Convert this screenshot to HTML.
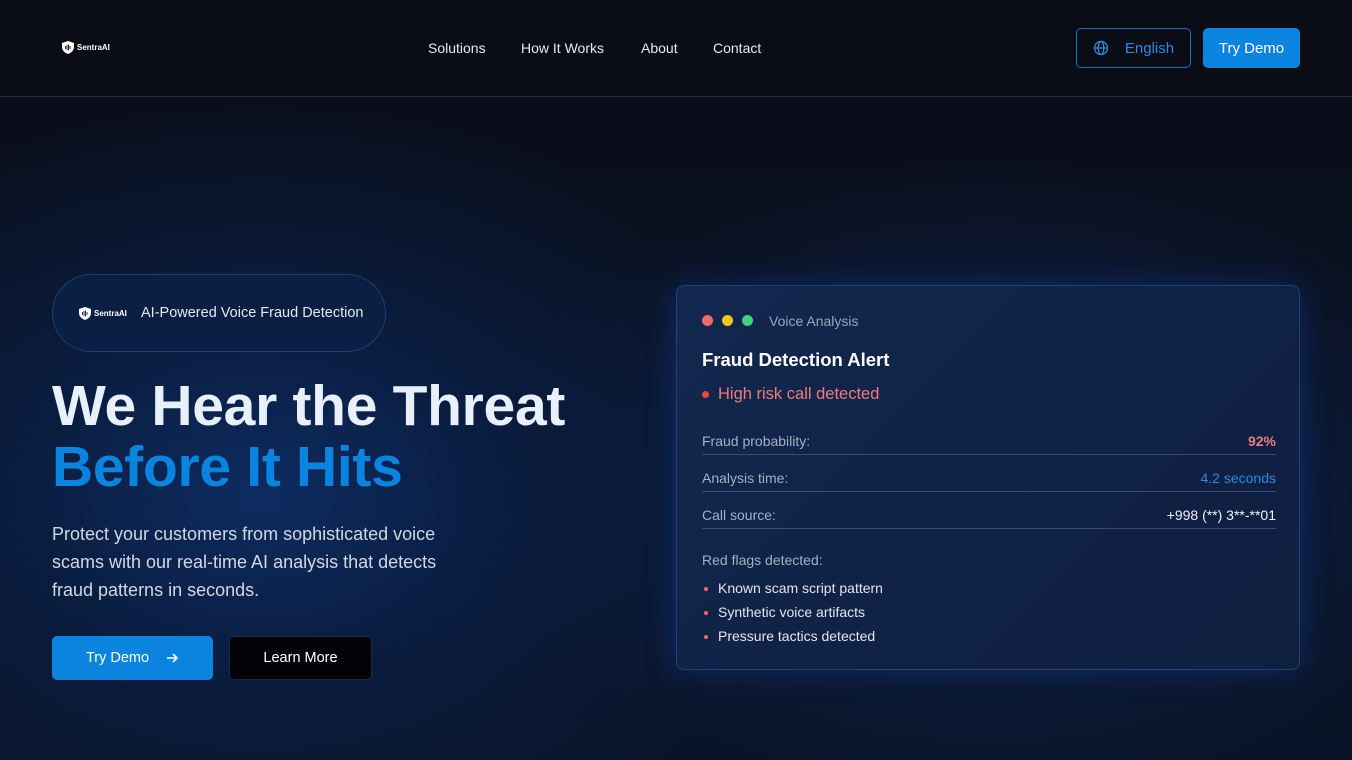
<!DOCTYPE html>
<html><head><meta charset="utf-8"><style>
*{margin:0;padding:0;box-sizing:border-box}
body{width:1352px;height:760px;overflow:hidden;font-family:"Liberation Sans",sans-serif;background:#0a0e1a;color:#fff;position:relative}
.nav{position:absolute;left:0;top:0;width:1352px;height:97px;background:#0a0d16;border-bottom:1px solid #262b36}
.hero{position:absolute;left:0;top:97px;width:1352px;height:663px;background:radial-gradient(ellipse 560px 400px at 260px 400px,#0d2c60 0%,#0a1c3e 45%,rgba(10,14,26,0) 100%),radial-gradient(ellipse 520px 320px at 990px 380px,#0e2450 0%,rgba(10,14,26,0) 100%),linear-gradient(#0a0e1a,#0a1428)}
.logo{position:absolute;display:flex;align-items:center;gap:3px;font-size:8px;color:#fff;font-weight:bold}
.navl{position:absolute;top:40px;font-size:14px;color:#e6e9ef}
.btn{position:absolute;display:flex;align-items:center;justify-content:center;border-radius:5px;font-size:14px}
.card{position:absolute;left:676px;top:285px;width:624px;height:385px;border:1px solid #23406e;border-radius:8px;background:linear-gradient(135deg,#13284f,#0f2144 60%,#0f1f40);box-shadow:0 0 30px rgba(20,80,200,.35)}
.row{position:absolute;left:25px;width:574px;height:37px;border-bottom:1px solid #3a4c6c;font-size:14px;color:#a6b0c2;display:flex;justify-content:space-between;align-items:flex-end;padding-bottom:5px}
.li{position:absolute;left:25px;font-size:14px;color:#e2e6ee}
.li:before{content:"";position:absolute;left:2px;top:7px;width:4px;height:4px;border-radius:50%;background:#ef6b6b}
.li span{margin-left:16px}
</style></head><body>
<div class="nav">
<div class="logo" style="left:62px;top:41px"><svg width="12" height="13" viewBox="0 0 12 13"><path d="M6 0L12 2V6C12 9.5 9 12 6 13C3 12 0 9.5 0 6V2Z" fill="#fff"/><path d="M3.5 5v3M5 4v5M6.5 3.5v6M8 5v3" stroke="#0a0d16" stroke-width="0.9"/></svg>SentraAI</div>
<div class="navl" style="left:428px">Solutions</div>
<div class="navl" style="left:521px">How It Works</div>
<div class="navl" style="left:641px">About</div>
<div class="navl" style="left:713px">Contact</div>
<div class="btn" style="left:1076px;top:28px;width:115px;height:40px;border:1px solid #1e6fc2;color:#2b8be0;font-size:15px"><svg width="16" height="16" viewBox="0 0 16 16" style="position:absolute;left:16px;top:11px" fill="none" stroke="#2b8be0" stroke-width="1.3"><circle cx="8" cy="8" r="6.5"/><ellipse cx="8" cy="8" rx="2.8" ry="6.5"/><path d="M1.5 8h13"/></svg><span style="margin-left:32px">English</span></div>
<div class="btn" style="left:1203px;top:28px;width:97px;height:40px;background:#0b84e0;color:#fff;font-size:15px">Try Demo</div>
</div>
<div class="hero"></div>
<div style="position:absolute;left:52px;top:274px;width:334px;height:78px;border:1px solid #1d3f6e;border-radius:39px;background:#0b1f45"></div>
<div class="logo" style="left:79px;top:307px"><svg width="12" height="13" viewBox="0 0 12 13"><path d="M6 0L12 2V6C12 9.5 9 12 6 13C3 12 0 9.5 0 6V2Z" fill="#fff"/><path d="M3.5 5v3M5 4v5M6.5 3.5v6M8 5v3" stroke="#0b1f45" stroke-width="0.9"/></svg>SentraAI</div>
<div style="position:absolute;left:141px;top:305px;font-size:14.5px;color:#e2e8f2">AI-Powered Voice Fraud Detection</div>
<div style="position:absolute;left:52px;top:376px;font-size:57px;font-weight:bold;letter-spacing:-0.3px;line-height:60px;color:#e8f0fc">We Hear the Threat</div>
<div style="position:absolute;left:52px;top:437px;font-size:57px;font-weight:bold;letter-spacing:-0.3px;line-height:60px;color:#0b84e0">Before It Hits</div>
<div style="position:absolute;left:52px;top:520px;width:425px;font-size:18px;line-height:28px;color:#d2d8e2">Protect your customers from sophisticated voice scams with our real-time AI analysis that detects fraud patterns in seconds.</div>
<div class="btn" style="left:52px;top:636px;width:161px;height:44px;background:#0b84e0;font-size:14.5px">Try Demo<svg width="14" height="14" viewBox="0 0 14 14" style="margin-left:16px" fill="none" stroke="#fff" stroke-width="1.6"><path d="M2 7h10M8 3l4 4-4 4"/></svg></div>
<div class="btn" style="left:229px;top:636px;width:143px;height:44px;background:#02040a;border:1px solid #1e2a40;font-size:14.5px">Learn More</div>
<div class="card">
<div style="position:absolute;left:25px;top:29px;width:11px;height:11px;border-radius:50%;background:#ef6b6b"></div>
<div style="position:absolute;left:45px;top:29px;width:11px;height:11px;border-radius:50%;background:#f5c518"></div>
<div style="position:absolute;left:65px;top:29px;width:11px;height:11px;border-radius:50%;background:#3fd37a"></div>
<div style="position:absolute;left:92px;top:27px;font-size:14px;color:#9aa6ba">Voice Analysis</div>
<div style="position:absolute;left:25px;top:63px;font-size:18.5px;font-weight:bold;color:#fff">Fraud Detection Alert</div>
<div style="position:absolute;left:25px;top:105px;width:7px;height:7px;border-radius:50%;background:#ef4444"></div>
<div style="position:absolute;left:41px;top:99px;font-size:16.5px;color:#f07a7a">High risk call detected</div>
<div class="row" style="top:132px"><span>Fraud probability:</span><span style="color:#f07a7a;font-weight:bold">92%</span></div>
<div class="row" style="top:169px"><span>Analysis time:</span><span style="color:#2b8be0">4.2 seconds</span></div>
<div class="row" style="top:206px"><span>Call source:</span><span style="color:#f0f2f6">+998 (**) 3**-**01</span></div>
<div style="position:absolute;left:25px;top:266px;font-size:14px;color:#a6b0c2">Red flags detected:</div>
<div class="li" style="top:294px"><span>Known scam script pattern</span></div>
<div class="li" style="top:318px"><span>Synthetic voice artifacts</span></div>
<div class="li" style="top:342px"><span>Pressure tactics detected</span></div>
</div>
</body></html>
